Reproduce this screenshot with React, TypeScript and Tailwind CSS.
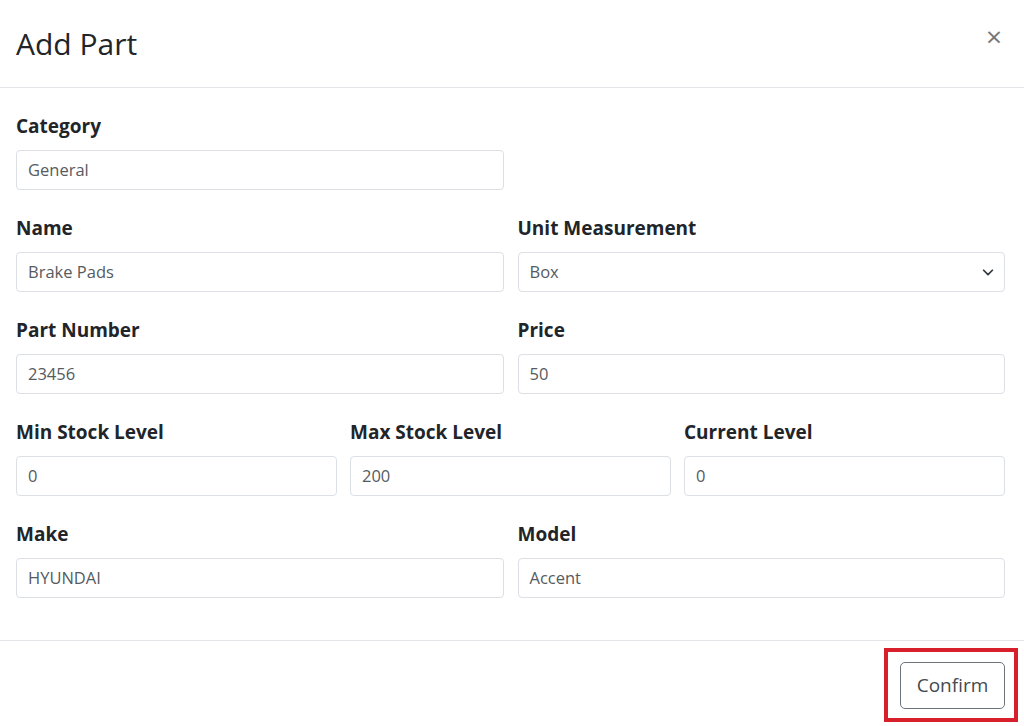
import React from "react";

const inputCls =
  "h-[40px] w-full rounded-[4px] border border-[#dcdfe3] bg-white px-[11px] text-[16.5px] text-[#555b61] flex items-center";

function Field({ label, value, select }: { label: string; value: string; select?: boolean }) {
  return (
    <div className="flex flex-col">
      <div className="h-[24px] text-[19px] font-bold leading-[24px] text-[#212529]">{label}</div>
      <div className={inputCls + " mt-[12px] justify-between"}>
        <span>{value}</span>
        {select && (
          <svg width="14" height="14" viewBox="0 0 16 16" className="mr-[-2px]">
            <path d="M3 6l5 5 5-5" fill="none" stroke="#343a40" strokeWidth="2" strokeLinecap="round" strokeLinejoin="round" />
          </svg>
        )}
      </div>
    </div>
  );
}

export default function App() {
  return (
    <div
      className="relative h-[726px] w-[1024px] overflow-hidden bg-white"
      style={{ fontFamily: '"Open Sans", "Noto Sans", sans-serif' }}
    >
      <div className="flex h-[88px] items-center justify-between border-b border-[#e3e5e8] pl-[16px] pr-[22px]">
        <div className="text-[30px] leading-[34px] text-[#212529] pt-[1px]">Add Part</div>
        <div className="text-[28px] leading-none text-[#777] mt-[-16px]">×</div>
      </div>
      <div className="flex flex-col gap-[26px] pl-[16px] pt-[26px] pb-[42px] pr-[19px] border-b border-[#e3e5e8]">
        <div className="grid grid-cols-2 gap-[14px]">
          <Field label="Category" value="General" />
        </div>
        <div className="grid grid-cols-2 gap-[14px]">
          <Field label="Name" value="Brake Pads" />
          <Field label="Unit Measurement" value="Box" select />
        </div>
        <div className="grid grid-cols-2 gap-[14px]">
          <Field label="Part Number" value="23456" />
          <Field label="Price" value="50" />
        </div>
        <div className="grid grid-cols-3 gap-[13px]">
          <Field label="Min Stock Level" value="0" />
          <Field label="Max Stock Level" value="200" />
          <Field label="Current Level" value="0" />
        </div>
        <div className="grid grid-cols-2 gap-[14px]">
          <Field label="Make" value="HYUNDAI" />
          <Field label="Model" value="Accent" />
        </div>
      </div>
      <div className="flex justify-end pr-[19px] pt-[21px]">
        <button className="h-[47px] w-[105px] rounded-[5px] border border-[#6c757d] text-[19px] text-[#444a50]">
          Confirm
        </button>
      </div>
      <div className="absolute left-[884px] top-[648px] h-[74px] w-[134px] border-[4px] border-[#d7202b]" />
    </div>
  );
}
